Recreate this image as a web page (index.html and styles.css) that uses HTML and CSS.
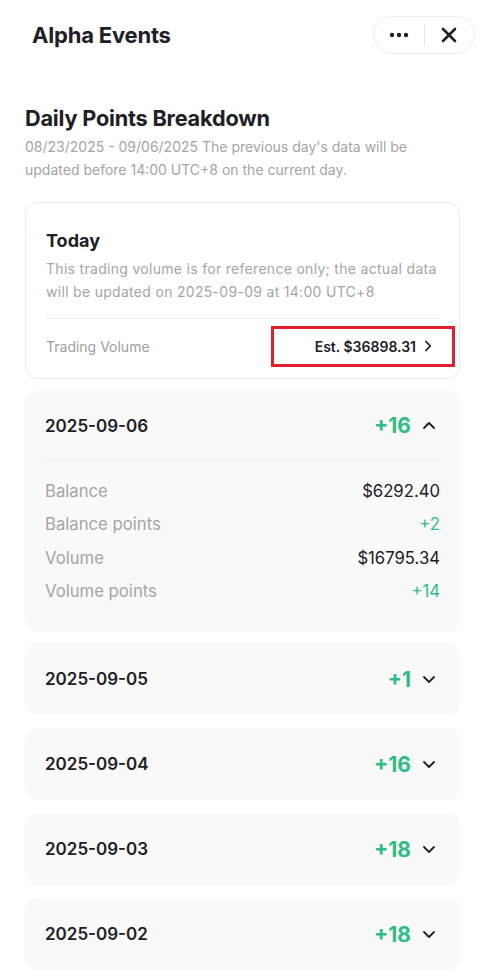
FILE: index.html
```html
<!DOCTYPE html>
<html>
<head>
<meta charset="utf-8">
<link rel="stylesheet" href="styles.css">
</head>
<body>
<div class="page">
  <header class="topbar">
    <h1 class="title">Alpha Events</h1>
    <div class="pill">
      <span class="pill-btn">
        <svg width="20" height="6" viewBox="0 0 20 6"><circle cx="3" cy="3" r="2.2" fill="#1e2026"/><circle cx="10" cy="3" r="2.2" fill="#1e2026"/><circle cx="17" cy="3" r="2.2" fill="#1e2026"/></svg>
      </span>
      <span class="pill-sep"></span>
      <span class="pill-btn">
        <svg width="16" height="16" viewBox="0 0 16 16"><path d="M2 2L14 14M14 2L2 14" stroke="#1e2026" stroke-width="2.6" stroke-linecap="round"/></svg>
      </span>
    </div>
  </header>

  <section class="intro">
    <h2 class="heading">Daily Points Breakdown</h2>
    <p class="sub">08/23/2025 - 09/06/2025 The previous day's data will be updated before 14:00 UTC+8 on the current day.</p>
  </section>

  <div class="today">
    <h3 class="today-title">Today</h3>
    <p class="today-desc">This trading volume is for reference only; the actual data will be updated on 2025-09-09 at 14:00 UTC+8</p>
    <div class="today-row">
      <span class="label">Trading Volume</span>
      <span class="est">Est. $36898.31
        <svg width="8" height="12" viewBox="0 0 8 12"><path d="M2 1.5L6.2 6L2 10.5" stroke="#1e2026" stroke-width="1.8" fill="none" stroke-linecap="round" stroke-linejoin="round"/></svg>
      </span>
    </div>
  </div>

  <div class="day open">
    <div class="day-head">
      <span class="date">2025-09-06</span>
      <span class="pts">+16
        <svg class="chev" width="14" height="9" viewBox="0 0 14 9"><path d="M2 7L7 2L12 7" stroke="#1e2026" stroke-width="1.8" fill="none" stroke-linecap="round" stroke-linejoin="round"/></svg>
      </span>
    </div>
    <div class="day-body">
      <div class="kv"><span class="k">Balance</span><span class="v">$6292.40</span></div>
      <div class="kv"><span class="k">Balance points</span><span class="v g">+2</span></div>
      <div class="kv"><span class="k">Volume</span><span class="v">$16795.34</span></div>
      <div class="kv"><span class="k">Volume points</span><span class="v g">+14</span></div>
    </div>
  </div>

  <div class="day">
    <div class="day-head">
      <span class="date">2025-09-05</span>
      <span class="pts">+1
        <svg class="chev" width="14" height="9" viewBox="0 0 14 9"><path d="M2 2L7 7L12 2" stroke="#1e2026" stroke-width="1.8" fill="none" stroke-linecap="round" stroke-linejoin="round"/></svg>
      </span>
    </div>
  </div>
  <div class="day">
    <div class="day-head">
      <span class="date">2025-09-04</span>
      <span class="pts">+16
        <svg class="chev" width="14" height="9" viewBox="0 0 14 9"><path d="M2 2L7 7L12 2" stroke="#1e2026" stroke-width="1.8" fill="none" stroke-linecap="round" stroke-linejoin="round"/></svg>
      </span>
    </div>
  </div>
  <div class="day">
    <div class="day-head">
      <span class="date">2025-09-03</span>
      <span class="pts">+18
        <svg class="chev" width="14" height="9" viewBox="0 0 14 9"><path d="M2 2L7 7L12 2" stroke="#1e2026" stroke-width="1.8" fill="none" stroke-linecap="round" stroke-linejoin="round"/></svg>
      </span>
    </div>
  </div>
  <div class="day">
    <div class="day-head">
      <span class="date">2025-09-02</span>
      <span class="pts">+18
        <svg class="chev" width="14" height="9" viewBox="0 0 14 9"><path d="M2 2L7 7L12 2" stroke="#1e2026" stroke-width="1.8" fill="none" stroke-linecap="round" stroke-linejoin="round"/></svg>
      </span>
    </div>
  </div>
</div>
</body>
</html>
```

FILE: styles.css
```css
* { box-sizing: border-box; }
html, body { margin: 0; padding: 0; background: #fff; }
body {
  font-family: "Inter", "Noto Sans", sans-serif;
  color: #1e2026;
  width: 485px;
  height: 975px;
  overflow: hidden;
}
.page { padding: 0 25px 0 25px; }

.topbar {
  display: flex;
  align-items: center;
  justify-content: space-between;
  padding: 16px 10px 0 7px;
  height: 54px;
}
.title { margin: 0; font-size: 22px; font-weight: 700; letter-spacing: -0.2px; }
.pill {
  display: flex;
  align-items: center;
  height: 38px;
  width: 102px;
  border: 1px solid #ececec;
  border-radius: 19px;
  margin-right: -25px;
}
.pill-btn { flex: 1; display: flex; align-items: center; justify-content: center; }
.pill-sep { width: 1px; height: 22px; background: #e6e6e6; }

.intro { padding-top: 51px; }
.heading { margin: 0; font-size: 21.7px; font-weight: 700; line-height: 26px; letter-spacing: -0.2px; }
.sub { margin: 4px 0 0; font-size: 14px; line-height: 23px; color: #a5a5a5; }

.today {
  margin-top: 21px;
  border: 1px solid #ececec;
  border-radius: 12px;
  padding: 26px 20px 0 20px;
  height: 177px;
}
.today-title { margin: 0; font-size: 18px; font-weight: 700; line-height: 24px; }
.today-desc { margin: 4px 0 0; font-size: 14px; letter-spacing: 0.3px; line-height: 23px; color: #a5a5a5; }
.today-row {
  margin-top: 15px;
  border-top: 1px solid #ececec;
  display: flex;
  align-items: center;
  justify-content: space-between;
  height: 55px;
}
.label { font-size: 14px; color: #a0a0a0; }
.est {
  display: flex;
  align-items: center;
  gap: 8px;
  font-size: 14px;
  font-weight: 600;
  border: 3px solid #e0202a;
  height: 41px;
  width: 184px;
  justify-content: flex-end;
  padding-right: 20px;
  margin-right: -16px;
}

.day {
  margin-top: 12px;
  background: #f9f9f9;
  border-radius: 12px;
  padding: 0 20px;
}
.day + .day { margin-top: 13px; }
.open + .day { margin-top: 11px; }
.day-head {
  display: flex;
  align-items: center;
  justify-content: space-between;
  height: 72px;
}
.open .day-head { height: 70px; border-bottom: 1px solid #ececec; }
.date { font-size: 17px; font-weight: 600; }
.pts { display: flex; align-items: center; gap: 11px; font-size: 21px; font-weight: 700; color: #2ebd85; padding-right: 4px; }
.chev { display: block; }
.day-body { padding: 13px 0 24px; }
.kv { display: flex; justify-content: space-between; align-items: center; height: 33.5px; font-size: 16.7px; }
.k { color: #a5a5a5; }
.v { color: #1e2026; }
.v.g { color: #2ebd85; }
```
